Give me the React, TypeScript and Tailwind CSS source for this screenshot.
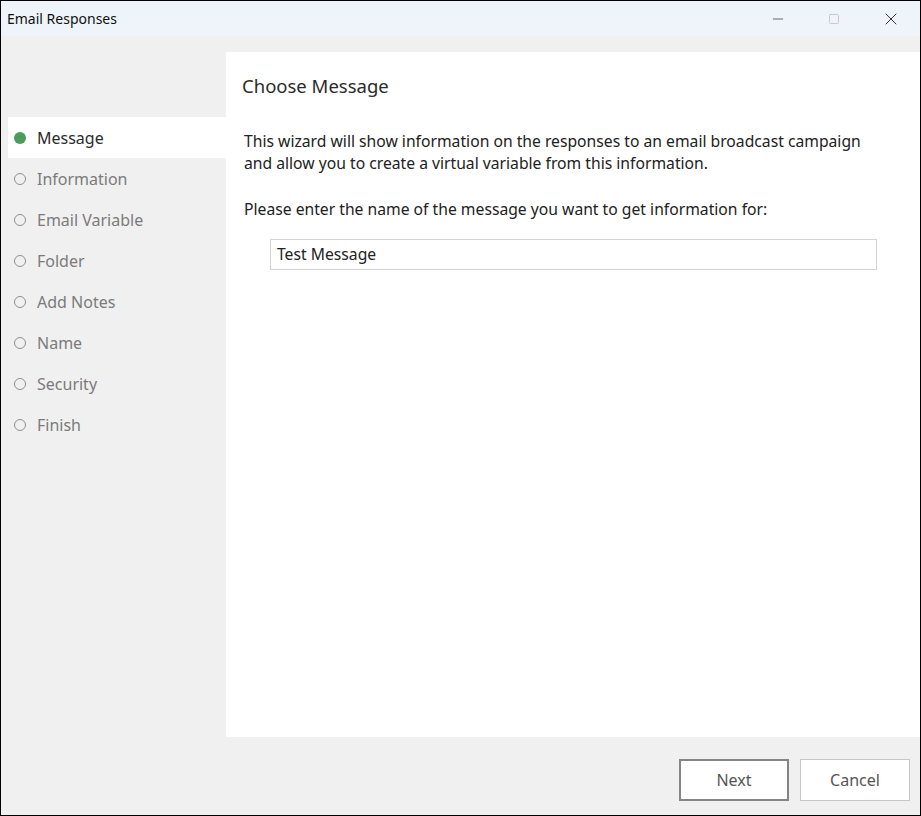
import { Minus, Square, X } from 'lucide-react'

const steps = ['Message', 'Information', 'Email Variable', 'Folder', 'Add Notes', 'Name', 'Security', 'Finish']

function StepItem({ label, active }: { label: string; active: boolean }) {
  return (
    <div className={`flex h-[41px] items-center pl-[6px] ${active ? 'bg-white text-[#2b2b2b]' : 'text-[#7b7b7b]'}`}>
      <span
        className={`h-[12px] w-[12px] rounded-full ${active ? 'bg-[#4c9a5c]' : 'border-[1.5px] border-[#8f8f8f] bg-transparent'}`}
      />
      <span className="ml-[11px] text-[16px]">{label}</span>
    </div>
  )
}

export default function App() {
  return (
    <div
      className="flex h-[816px] w-[921px] flex-col border border-black bg-[#f0f0f0] text-[#222]"
      style={{ fontFamily: '"Noto Sans", "Open Sans", sans-serif' }}
    >
      {/* Title bar */}
      <div className="flex h-[35px] shrink-0 items-center bg-[#eef4f9]">
        <span className="ml-[6px] text-[14px] text-[#111]">Email Responses</span>
        <div className="ml-auto flex h-full items-center">
          <div className="flex h-full w-[56px] items-center justify-center">
            <Minus className="h-4 w-4 text-[#222]" strokeWidth={1} />
          </div>
          <div className="flex h-full w-[56px] items-center justify-center">
            <Square className="h-[12px] w-[12px] text-[#bbb]" strokeWidth={1.5} />
          </div>
          <div className="flex h-full w-[58px] items-center justify-center">
            <X className="h-[20px] w-[20px] text-[#222]" strokeWidth={1.1} />
          </div>
        </div>
      </div>

      {/* Body */}
      <div className="flex flex-1 pt-[16px]">
        <div className="w-[225px] shrink-0 pl-[7px] pt-[65px]">
          {steps.map((s, i) => (
            <StepItem key={s} label={s} active={i === 0} />
          ))}
        </div>
        <div className="h-[685px] flex-1 bg-white px-[16px] pt-[20px]">
          <h1 className="text-[18.5px] text-[#2b2b2b]">Choose Message</h1>
          <p className="mt-[30px] pl-[2px] text-[15.7px] leading-[22px]">
            This wizard will show information on the responses to an email broadcast campaign
            <br />
            and allow you to create a virtual variable from this information.
          </p>
          <p className="mt-[24px] pl-[2px] text-[15.7px] leading-[22px]">
            Please enter the name of the message you want to get information for:
          </p>
          <div className="ml-[28px] mt-[19px] flex h-[31px] w-[607px] items-center border border-[#d3d3d3] px-[6px] pt-[2px] text-[15.7px]">
            Test Message
          </div>
        </div>
      </div>

      {/* Footer */}
      <div className="flex h-[77px] shrink-0 items-start justify-end gap-[11px] pr-[10px] pt-[21px]">
        <button className="h-[42px] w-[110px] border-2 border-[#858585] bg-white text-[16px] text-[#555]">Next</button>
        <button className="h-[42px] w-[110px] border border-[#c6c6c6] bg-white text-[16px] text-[#555]">Cancel</button>
      </div>
    </div>
  )
}
